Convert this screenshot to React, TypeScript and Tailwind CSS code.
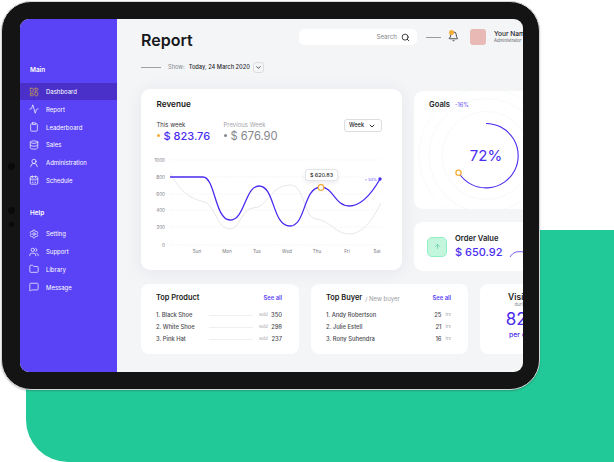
// App.tsx
import {
  Activity,
  Bell,
  CalendarDays,
  ChevronDown,
  Clipboard,
  Database,
  Folder,
  LayoutDashboard,
  MessageSquare,
  Search,
  Settings,
  UserRound,
  Users,
  ArrowUp,
  type LucideIcon,
} from "lucide-react";

type NavItem = {
  label: string;
  icon: LucideIcon;
  active?: boolean;
};

const mainNav: NavItem[] = [
  { label: "Dashboard", icon: LayoutDashboard, active: true },
  { label: "Report", icon: Activity },
  { label: "Leaderboard", icon: Clipboard },
  { label: "Sales", icon: Database },
  { label: "Administration", icon: UserRound },
  { label: "Schedule", icon: CalendarDays },
];

const helpNav: NavItem[] = [
  { label: "Setting", icon: Settings },
  { label: "Support", icon: Users },
  { label: "Library", icon: Folder },
  { label: "Message", icon: MessageSquare },
];

const products = [
  { name: "1. Black Shoe", sold: 350 },
  { name: "2. White Shoe", sold: 298 },
  { name: "3. Pink Hat", sold: 237 },
];

const buyers = [
  { name: "1. Andy Robertson", trx: 25 },
  { name: "2. Julie Estell", trx: 21 },
  { name: "3. Rony Suhendra", trx: 16 },
];

const yLabels = [
  { text: "1000", y: 159 },
  { text: "800", y: 176 },
  { text: "600", y: 193 },
  { text: "400", y: 209 },
  { text: "200", y: 226 },
  { text: "0", y: 244 },
];

const xLabels = [
  { text: "Sun", x: 197 },
  { text: "Mon", x: 227 },
  { text: "Tue", x: 257 },
  { text: "Wed", x: 287 },
  { text: "Thu", x: 317 },
  { text: "Fri", x: 347 },
  { text: "Sat", x: 377 },
];

function NavRow({ item }: { item: NavItem }) {
  const Icon = item.icon;
  return (
    <div
      className={
        item.active
          ? "flex h-[17.8px] items-center gap-[7px] bg-[#4a30c9] pl-[9px] text-[6px] text-white"
          : "flex h-[17.8px] items-center gap-[7px] pl-[9px] text-[6px] text-white"
      }
    >
      <Icon
        size={10}
        strokeWidth={1.7}
        className={item.active ? "text-[#d0a050]" : "text-white"}
      />
      <span>{item.label}</span>
    </div>
  );
}

function RevenueChart() {
  return (
    <svg
      width="240"
      height="100"
      viewBox="150 155 240 100"
      className="ml-[9px] block"
    >
      {yLabels.map((l) => (
        <g key={l.text}>
          <line x1="170" x2="381" y1={l.y} y2={l.y} stroke="#f1f2f4" strokeWidth="0.7" strokeDasharray="2 1" />
          <text x="165" y={l.y + 1.5} textAnchor="end" fontSize="4.6" fill="#77787f">
            {l.text}
          </text>
        </g>
      ))}
      {xLabels.map((l) => (
        <text key={l.text} x={l.x} y="251.5" textAnchor="middle" fontSize="4.6" fill="#77787f">
          {l.text}
        </text>
      ))}
      <path
        d="M170 172 C180 190 190 198 205 201 C215 205 217 228 230 228 C240 228 242 207 253 207 C268 207 270 184 290 184 C305 184 303 216 316 218 C330 219 335 233 349 233 C362 233 372 220 381 202"
        fill="none"
        stroke="#e6e6e8"
        strokeWidth="1"
      />
      <path
        d="M170 176 L203 176 C215 176 215 219 230 219 C245 219 245 185 259 185 C275 185 272 225 290 225 C306 225 303 186 321 186 C333 186 335 205 349 205 C362 205 372 192 380 178"
        fill="none"
        stroke="#4a2cf0"
        strokeWidth="1.3"
      />
      <circle cx="380" cy="178" r="1.7" fill="#4a2cf0" />
      <text x="377" y="179.5" textAnchor="end" fontSize="4" fill="#6c52f5">
        + 53%
      </text>
      <circle cx="321" cy="186.5" r="2.8" fill="#ffffff" stroke="#f5ad35" strokeWidth="1.2" />
    </svg>
  );
}

function GoalsRing() {
  return (
    <svg width="110" height="118" viewBox="414 91 110 118" className="absolute left-0 top-0">
      <circle cx="486" cy="155.5" r="44" fill="none" stroke="#f3f4f6" strokeWidth="0.6" />
      <circle cx="486" cy="155.5" r="57" fill="none" stroke="#f3f4f6" strokeWidth="0.6" />
      <circle cx="486" cy="155.5" r="67" fill="none" stroke="#f5f6f8" strokeWidth="0.6" />
      <path
        d="M486 123.5 A32.2 32.2 0 1 1 459.5 174"
        fill="none"
        stroke="#4a2cf0"
        strokeWidth="1.1"
      />
      <circle cx="458.5" cy="172.7" r="2.6" fill="#ffffff" stroke="#f5ad35" strokeWidth="1.3" />
    </svg>
  );
}

export default function App() {
  return (
    <div className="relative h-[462px] w-[614px] overflow-hidden bg-white font-['Inter',_'Noto_Sans',_sans-serif]">
      {/* green block behind the tablet */}
      <div className="absolute left-[26px] top-[230px] h-[232px] w-[588px] rounded-bl-[42px] bg-[#22c998]" />

      <div className="relative ml-[1px] mt-[1px] flex h-[389px] w-[539px] rounded-[30px] border border-[#d6d6d8] bg-[#141414] pb-[17px] pl-[18px] pr-[16px] pt-[17px] shadow-[0_1px_2px_rgba(0,0,0,0.2)]">
        {/* camera dots */}
        <div className="absolute left-[6px] top-[161px] h-[7px] w-[7px] rounded-full bg-[#0a0a0a]" />
        <div className="absolute left-[6px] top-[205px] h-[7px] w-[7px] rounded-full bg-[#0a0a0a]" />
        <div className="absolute left-[7px] top-[220px] h-[5px] w-[5px] rounded-full bg-[#0a0a0a]" />

        <div className="flex h-[353px] w-[503px] overflow-hidden rounded-[9px] bg-[#f4f5f7]">
          <aside className="w-[97px] shrink-0 bg-[#5a43f6] pt-[47px] font-normal">
            <p className="mb-[7px] pl-[10px] text-[6.4px] font-semibold text-white">Main</p>
            {mainNav.map((item) => (
              <NavRow key={item.label} item={item} />
            ))}
            <p className="mb-[6px] mt-[20px] pl-[10px] text-[6.4px] font-semibold text-white">Help</p>
            {helpNav.map((item) => (
              <NavRow key={item.label} item={item} />
            ))}
          </aside>

          <main className="min-w-0 flex-1 overflow-hidden pl-[24px]">
            <div className="w-[470px]">
              {/* header */}
              <div className="flex h-[26px] items-start pt-[10px]">
                <h1 className="w-[158px] text-[16px] font-semibold leading-[22px] text-[#17181c]">Report</h1>
                <div className="flex h-[16px] w-[118px] items-center justify-end gap-[4px] rounded-[5px] bg-white pr-[7px] text-[6.2px] text-[#85868c]">
                  <span>Search</span>
                  <Search size={9} strokeWidth={2.2} className="text-[#1c1c20]" />
                </div>
                <div className="ml-[9px] mt-[7.5px] h-px w-[15px] bg-[#9a9ba0]" />
                <div className="relative ml-[7px] mt-[2px]">
                  <Bell size={11} strokeWidth={1.7} className="text-[#1c1c20]" />
                  <div className="absolute left-[1px] top-[-1px] h-[4.5px] w-[4.5px] rounded-full bg-[#f5ad35]" />
                </div>
                <div className="ml-[11px] h-[16px] w-[16px] rounded-[3px] bg-[#e8b9b5]" />
                <div className="ml-[8px] pt-[1px]">
                  <p className="whitespace-nowrap text-[6.6px] font-medium leading-[8px] text-[#222328]">Your Name</p>
                  <p className="whitespace-nowrap text-[4.3px] leading-[6px] text-[#5f6066]">Administrator</p>
                </div>
              </div>

              {/* date row */}
              <div className="mt-[17px] flex h-[11px] items-center text-[5.7px]">
                <div className="h-px w-[20px] bg-[#a0a1a6]" />
                <span className="ml-[7px] text-[#85868c]">Show:</span>
                <span className="ml-[4px] font-medium text-[#2a2b30]">Today, 24 March 2020</span>
                <div className="ml-[3px] flex h-[11px] w-[11px] items-center justify-center rounded-[3px] border border-[#dcdde1]">
                  <ChevronDown size={7} strokeWidth={2.6} className="text-[#222328]" />
                </div>
              </div>

              {/* revenue + goals */}
              <div className="mt-[16px] flex gap-[12px]">
                <section className="relative h-[181px] w-[261px] shrink-0 rounded-[9px] bg-white shadow-[0_2px_18px_rgba(40,45,70,0.07)]">
                  <div className="px-[15.5px] pt-[10px]">
                    <h2 className="text-[8.2px] font-semibold leading-[10px] text-[#1b1c20]">Revenue</h2>
                    <div className="mt-[9px] flex">
                      <div className="mt-[3px] w-[67px]">
                        <p className="text-[6px] leading-[8px] text-[#34353a]">This week</p>
                        <div className="flex items-center">
                          <div className="mb-[3px] mr-[4px] h-[3px] w-[3px] rounded-full bg-[#f5ad35]" />
                          <span className="text-[11px] font-medium leading-[15px] text-[#4a2cf0]">$ 823.76</span>
                        </div>
                      </div>
                      <div className="mt-[3px]">
                        <p className="text-[6px] leading-[8px] text-[#a3a4aa]">Previous Week</p>
                        <div className="flex items-center">
                          <div className="mb-[3px] mr-[4px] h-[3px] w-[3px] rounded-full bg-[#85868c]" />
                          <span className="text-[11.2px] leading-[15px] text-[#85868c]">$ 676.90</span>
                        </div>
                      </div>
                      <div className="ml-auto mr-[5px] mt-[1px] flex h-[13px] w-[38px] items-center justify-center gap-[4px] rounded-[3px] border border-[#dcdde1] text-[5.6px] font-medium text-[#222328]">
                        <span>Week</span>
                        <ChevronDown size={8} strokeWidth={2.8} />
                      </div>
                    </div>
                  </div>
                  <div className="mt-[12px]">
                    <RevenueChart />
                  </div>
                  {/* tooltip over the chart */}
                  <div className="absolute left-[164px] top-[80px] flex h-[12px] w-[33px] items-center justify-center rounded-[3px] border border-[#e4e5e8] bg-white text-[5.4px] font-medium text-[#2a2b30] shadow-[0_2px_5px_rgba(0,0,0,0.08)]">
                    $ 620.83
                  </div>
                </section>

                <div className="mt-[2px] flex w-[170px] shrink-0 flex-col gap-[13px]">
                  <section className="relative h-[118px] overflow-hidden rounded-[9px] bg-white">
                    <GoalsRing />
                    <div className="relative flex items-center gap-[5px] pl-[15px] pt-[9px]">
                      <span className="text-[7.6px] font-semibold leading-[10px] text-[#232428]">Goals</span>
                      <span className="text-[5.6px] font-medium text-[#7b66f7]">-16%</span>
                    </div>
                    <p className="absolute left-[55px] top-[55px] w-[34px] text-center text-[15px] leading-[20px] text-[#4a2cf0]">72%</p>
                  </section>
                  <section className="relative flex h-[49px] items-center rounded-[9px] bg-white pl-[13px]">
                    <div className="flex h-[20px] w-[20px] items-center justify-center rounded-[5px] border border-[#8ff0c6] bg-[#c4f6de]">
                      <ArrowUp size={7} strokeWidth={1.6} className="text-[#2ab583]" />
                    </div>
                    <div className="ml-[8px]">
                      <p className="text-[7.6px] font-semibold leading-[9px] text-[#232428]">Order Value</p>
                      <p className="mt-[2px] whitespace-nowrap text-[11px] font-medium leading-[14px] text-[#4a2cf0]">$ 650.92</p>
                    </div>
                    <svg width="16" height="8" viewBox="0 0 16 8" className="ml-[6px] mt-[15px]">
                      <path d="M1 7 C4 2 8 1 15 2" fill="none" stroke="#4a2cf0" strokeWidth="0.8" />
                    </svg>
                  </section>
                </div>
              </div>

              {/* bottom cards */}
              <div className="mt-[13px] flex gap-[12px]">
                <section className="h-[70px] w-[158px] shrink-0 rounded-[8px] bg-white px-[15px] pt-[9px]">
                  <div className="flex items-center justify-between">
                    <h2 className="text-[7.4px] font-semibold leading-[10px] text-[#1b1c20]">Top Product</h2>
                    <span className="pr-[2px] text-[5.8px] font-semibold text-[#5a43f6]">See all</span>
                  </div>
                  <div className="mt-[6px]">
                    {products.map((p) => (
                      <div key={p.name} className="flex h-[12px] items-center text-[5.8px]">
                        <span className="w-[53px] shrink-0 whitespace-nowrap font-medium text-[#4b4c52]">{p.name}</span>
                        <div className="h-px w-[44px] bg-[#eeeff1]" />
                        <span className="ml-[6px] text-[4.4px] text-[#a3a4aa]">sold</span>
                        <span className="ml-auto pr-[2px] font-medium text-[#4b4c52]">{p.sold}</span>
                      </div>
                    ))}
                  </div>
                </section>

                <section className="h-[70px] w-[157px] shrink-0 rounded-[8px] bg-white px-[15px] pt-[9px]">
                  <div className="flex items-center">
                    <h2 className="text-[7.4px] font-semibold leading-[10px] text-[#1b1c20]">Top Buyer</h2>
                    <span className="ml-[3px] text-[6px] text-[#9a9ba0]">/ New buyer</span>
                    <span className="ml-auto pr-[2px] text-[5.8px] font-semibold text-[#5a43f6]">See all</span>
                  </div>
                  <div className="mt-[6px]">
                    {buyers.map((b) => (
                      <div key={b.name} className="flex h-[12px] items-center text-[5.8px]">
                        <span className="font-medium text-[#4b4c52]">{b.name}</span>
                        <span className="ml-auto font-medium text-[#4b4c52]">{b.trx}</span>
                        <span className="ml-[4px] pr-[2px] text-[4.4px] text-[#a3a4aa]">trx</span>
                      </div>
                    ))}
                  </div>
                </section>

                <section className="flex h-[70px] w-[83px] shrink-0 flex-col items-center rounded-[8px] bg-white pt-[8px]">
                  <h2 className="text-[8.5px] font-semibold leading-[10px] text-[#1b1c20]">Visitor</h2>
                  <span className="text-[4.6px] leading-[6px] text-[#85868c]">during</span>
                  <span className="text-[17px] leading-[23px] text-[#4a2cf0]">824</span>
                  <span className="text-[7px] font-medium leading-[8px] text-[#4a2cf0]">per day</span>
                </section>
              </div>
            </div>
          </main>
        </div>
      </div>
    </div>
  );
}
